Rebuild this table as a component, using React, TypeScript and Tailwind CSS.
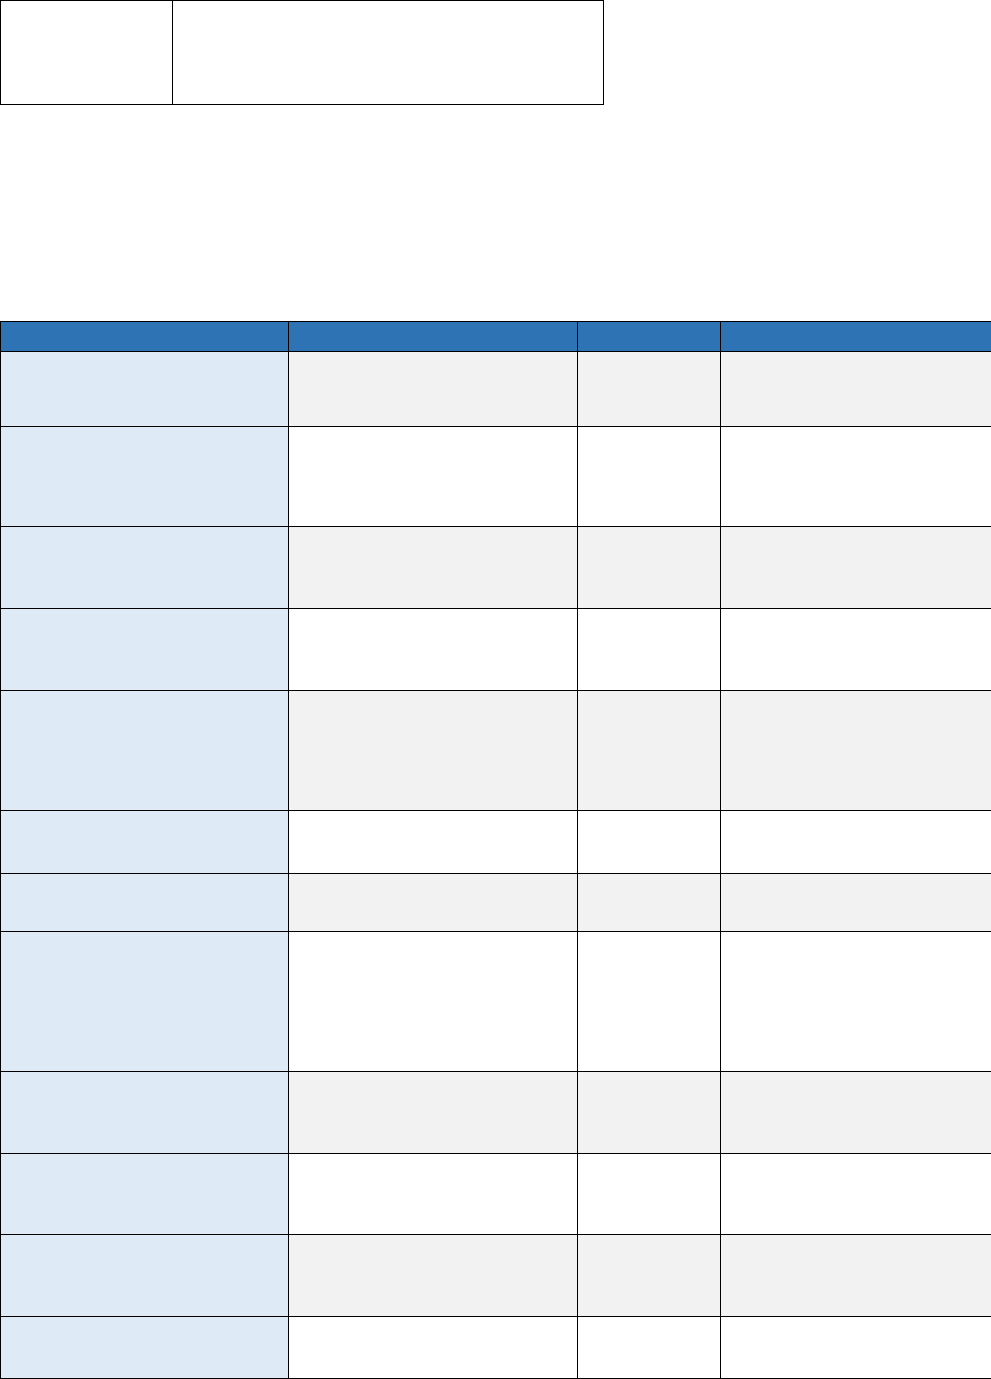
const headerCols = [288, 289, 143, 271];

// row heights measured from the reference (px)
const rowHeights = [75, 100, 82, 82, 120, 63, 58, 140, 82, 81, 82, 62];

export default function App() {
  return (
    <div className="min-h-[1379px] w-[991px] bg-white font-['Liberation_Sans',sans-serif]">
      <table className="w-[604px] table-fixed border-collapse">
        <colgroup>
          <col className="w-[172px]" />
          <col />
        </colgroup>
        <tbody>
          <tr className="h-[104px]">
            <td className="border border-black" />
            <td className="border border-black" />
          </tr>
        </tbody>
      </table>

      <div className="h-[216px]" />

      <table className="w-[991px] table-fixed border-collapse">
        <colgroup>
          {headerCols.map((w, i) => (
            <col key={i} style={{ width: w }} />
          ))}
        </colgroup>
        <thead>
          <tr className="h-[30px] bg-[#2e74b5]">
            <th className="border border-black" />
            <th className="border border-black" />
            <th className="border border-black" />
            <th className="border border-black" />
          </tr>
        </thead>
        <tbody>
          {rowHeights.map((h, idx) => (
            <tr key={idx} style={{ height: h }} className={idx % 2 === 0 ? 'bg-[#f2f2f2]' : 'bg-white'}>
              <td className="border border-black bg-[#deeaf6]" />
              <td className="border border-black" />
              <td className="border border-black" />
              <td className="border border-black" />
            </tr>
          ))}
        </tbody>
      </table>
    </div>
  );
}
